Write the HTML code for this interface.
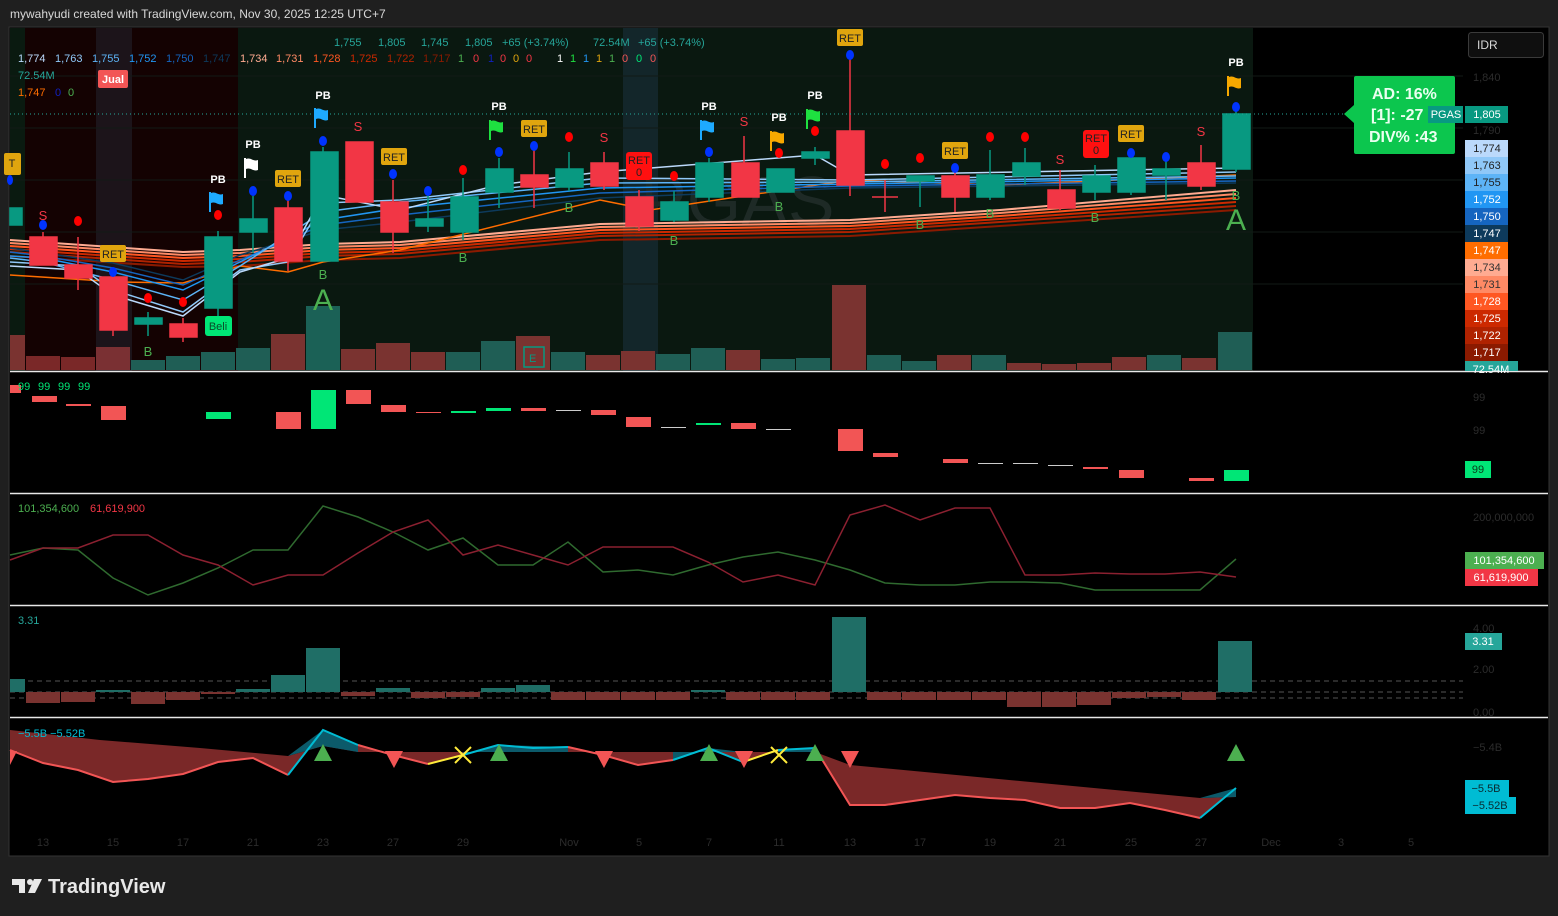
<!DOCTYPE html>
<html><head><meta charset="utf-8">
<style>
html,body{margin:0;padding:0;background:#1f1f1f;width:1558px;height:916px;overflow:hidden}
svg{display:block}
text{font-family:"Liberation Sans",sans-serif}
</style></head>
<body>
<svg width="1558" height="916" viewBox="0 0 1558 916" xmlns="http://www.w3.org/2000/svg">
<rect x="0" y="0" width="1558" height="916" fill="#1f1f1f"/>
<text x="10" y="18" font-size="12" fill="#d8d8d8">mywahyudi created with TradingView.com, Nov 30, 2025 12:25 UTC+7</text>
<!-- chart frame -->
<rect x="9" y="27" width="1540" height="829" fill="#000" stroke="#333" stroke-width="1"/>
<!-- main pane backgrounds -->
<rect x="10" y="28" width="15" height="343" fill="#0a1a10"/>
<rect x="25" y="28" width="213" height="343" fill="#140202"/>
<rect x="96" y="28" width="36" height="343" fill="#1c141a"/>
<rect x="238" y="28" width="1015" height="343" fill="#0a1810"/>
<rect x="623" y="28" width="35" height="343" fill="#13262a"/>
<!-- grid faint -->
<g stroke="#121a16" stroke-width="1">
<line x1="10" y1="76" x2="1463" y2="76"/><line x1="10" y1="128" x2="1463" y2="128"/><line x1="10" y1="180" x2="1463" y2="180"/><line x1="10" y1="232" x2="1463" y2="232"/><line x1="10" y1="284" x2="1463" y2="284"/>
</g>
<text x="640" y="225" font-size="70" fill="#1e2a26">PGAS</text>
<!-- volume -->
<g>
<rect x="10" y="335" width="15" height="35" fill="#7a3330"/>
<rect x="26" y="356" width="34" height="14" fill="#7a2828"/>
<rect x="61" y="357" width="34" height="13" fill="#7a2828"/>
<rect x="96" y="347" width="34" height="23" fill="#7a3033"/>
<rect x="131" y="360" width="34" height="10" fill="#1f5e55"/>
<rect x="166" y="356" width="34" height="14" fill="#1f5e55"/>
<rect x="201" y="352" width="34" height="18" fill="#1f5e55"/>
<rect x="236" y="348" width="34" height="22" fill="#1f5e55"/>
<rect x="271" y="334" width="34" height="36" fill="#7a3330"/>
<rect x="306" y="306" width="34" height="64" fill="#1b6156"/>
<rect x="341" y="349" width="34" height="21" fill="#7a3330"/>
<rect x="376" y="343" width="34" height="27" fill="#7a3330"/>
<rect x="411" y="352" width="34" height="18" fill="#7a3330"/>
<rect x="446" y="352" width="34" height="18" fill="#1f5e55"/>
<rect x="481" y="341" width="34" height="29" fill="#1f5e55"/>
<rect x="516" y="336" width="34" height="34" fill="#7a3330"/>
<rect x="551" y="352" width="34" height="18" fill="#1f5e55"/>
<rect x="586" y="355" width="34" height="15" fill="#7a3330"/>
<rect x="621" y="351" width="34" height="19" fill="#7a3330"/>
<rect x="656" y="354" width="34" height="16" fill="#1f5e55"/>
<rect x="691" y="348" width="34" height="22" fill="#1f5e55"/>
<rect x="726" y="350" width="34" height="20" fill="#7a3330"/>
<rect x="761" y="359" width="34" height="11" fill="#1f5e55"/>
<rect x="796" y="358" width="34" height="12" fill="#1f5e55"/>
<rect x="832" y="285" width="34" height="85" fill="#7a3330"/>
<rect x="867" y="355" width="34" height="15" fill="#1f5e55"/>
<rect x="902" y="361" width="34" height="9" fill="#1f5e55"/>
<rect x="937" y="355" width="34" height="15" fill="#7a3330"/>
<rect x="972" y="355" width="34" height="15" fill="#1f5e55"/>
<rect x="1007" y="363" width="34" height="7" fill="#7a3330"/>
<rect x="1042" y="364" width="34" height="6" fill="#7a3330"/>
<rect x="1077" y="363" width="34" height="7" fill="#7a3330"/>
<rect x="1112" y="357" width="34" height="13" fill="#7a3330"/>
<rect x="1147" y="355" width="34" height="15" fill="#1f5e55"/>
<rect x="1182" y="358" width="34" height="12" fill="#7a3330"/>
<rect x="1218" y="332" width="34" height="38" fill="#1f5e55"/>
</g>
<rect x="524" y="347" width="20" height="20" fill="none" stroke="#089981" stroke-width="1.5" transform="rotate(0)"/>
<text x="529" y="362" font-size="11" fill="#089981">E</text>
<!-- orange/red EMA band -->
<g fill="none" stroke-width="2">
<polyline stroke="#ffab91" points="10,240 183,252 240,250 323,244 400,242 600,224 850,220 1000,210 1236,190"/>
<polyline stroke="#ff8a65" points="10,243 183,255 240,253 323,247 400,245 600,227 850,223 1000,213 1236,194"/>
<polyline stroke="#ff5722" points="10,246 183,258 240,256 323,250 400,248 600,230 850,226 1000,216 1236,198"/>
<polyline stroke="#cc2900" points="10,249 183,261 240,259 323,253 400,251 600,233 850,229 1000,219 1236,202"/>
<polyline stroke="#b02200" points="10,252 183,264 240,262 323,256 400,254 600,236 850,232 1000,222 1236,206"/>
<polyline stroke="#8b1a00" points="10,256 183,267 240,266 323,260 400,258 600,240 850,236 1000,226 1236,210"/>
<polyline stroke="#ff6d00" stroke-width="1.5" points="10,275 120,282 183,283 240,266 288,272 323,262 400,250 600,200 650,210 850,180 1000,185 1236,175"/>
</g>
<g fill="none" stroke-width="1.5">
<polyline stroke="#0d3a5c" points="10,248 43,253 113,263 183,280 240,255 323,230 400,222 600,198 850,188 1236,183"/>
<polyline stroke="#1565c0" points="10,252 43,256 113,268 183,285 240,260 323,225 400,215 600,193 850,186 1236,181"/>
<polyline stroke="#2196f3" points="10,256 43,258 113,272 183,290 240,262 323,220 400,208 600,188 850,184 1236,178"/>
<polyline stroke="#5db4f7" points="10,258 43,262 113,280 183,300 240,266 323,212 400,202 600,183 850,182 1236,176"/>
<polyline stroke="#90c8f8" points="10,262 78,266 113,290 183,312 240,270 288,262 323,203 400,200 600,178 850,180 1236,172"/>
<polyline stroke="#bbd9fb" points="10,266 78,270 113,295 183,316 240,272 288,258 323,195 400,210 498,185 600,172 815,155 850,175 1236,168"/>
</g>
<!-- candles -->
<g stroke-width="1.5">
<g stroke="#089981" fill="#089981"><rect x="10" y="208" width="12" height="17"/></g>
<g stroke="#f23645" fill="#f23645"><line x1="43" y1="232" x2="43" y2="265"/><rect x="30" y="237" width="27" height="28"/></g>
<g stroke="#f23645" fill="#f23645"><line x1="78" y1="237" x2="78" y2="290"/><rect x="65" y="265" width="27" height="13"/></g>
<g stroke="#f23645" fill="#f23645"><line x1="113" y1="270" x2="113" y2="336"/><rect x="100" y="277" width="27" height="53"/></g>
<g stroke="#089981" fill="#089981"><line x1="148" y1="312" x2="148" y2="336"/><rect x="135" y="318" width="27" height="6"/></g>
<g stroke="#f23645" fill="#f23645"><line x1="183" y1="318" x2="183" y2="342"/><rect x="170" y="324" width="27" height="13"/></g>
<g stroke="#089981" fill="#089981"><line x1="218" y1="231" x2="218" y2="316"/><rect x="205" y="237" width="27" height="71"/></g>
<g stroke="#089981" fill="#089981"><line x1="253" y1="196" x2="253" y2="253"/><rect x="240" y="219" width="27" height="13"/></g>
<g stroke="#f23645" fill="#f23645"><line x1="288" y1="198" x2="288" y2="271"/><rect x="275" y="208" width="27" height="53"/></g>
<g stroke="#089981" fill="#089981"><line x1="323" y1="147" x2="323" y2="261"/><rect x="311" y="152" width="27" height="109"/></g>
<g stroke="#f23645" fill="#f23645"><rect x="346" y="142" width="27" height="60"/></g>
<g stroke="#f23645" fill="#f23645"><line x1="393" y1="180" x2="393" y2="253"/><rect x="381" y="202" width="27" height="30"/></g>
<g stroke="#089981" fill="#089981"><line x1="428" y1="192" x2="428" y2="232"/><rect x="416" y="219" width="27" height="7"/></g>
<g stroke="#089981" fill="#089981"><line x1="463" y1="178" x2="463" y2="240"/><rect x="451" y="197" width="27" height="35"/></g>
<g stroke="#089981" fill="#089981"><line x1="499" y1="158" x2="499" y2="208"/><rect x="486" y="169" width="27" height="23"/></g>
<g stroke="#f23645" fill="#f23645"><line x1="534" y1="150" x2="534" y2="208"/><rect x="521" y="175" width="27" height="12"/></g>
<g stroke="#089981" fill="#089981"><line x1="569" y1="152" x2="569" y2="191"/><rect x="556" y="169" width="27" height="18"/></g>
<g stroke="#f23645" fill="#f23645"><line x1="604" y1="152" x2="604" y2="190"/><rect x="591" y="163" width="27" height="23"/></g>
<g stroke="#f23645" fill="#f23645"><line x1="639" y1="190" x2="639" y2="231"/><rect x="626" y="197" width="27" height="29"/></g>
<g stroke="#089981" fill="#089981"><line x1="674" y1="191" x2="674" y2="222"/><rect x="661" y="202" width="27" height="18"/></g>
<g stroke="#089981" fill="#089981"><line x1="709" y1="158" x2="709" y2="202"/><rect x="696" y="163" width="27" height="34"/></g>
<g stroke="#f23645" fill="#f23645"><line x1="744" y1="136" x2="744" y2="197"/><rect x="732" y="163" width="27" height="34"/></g>
<g stroke="#089981" fill="#089981"><rect x="767" y="169" width="27" height="23"/></g>
<g stroke="#089981" fill="#089981"><line x1="815" y1="147" x2="815" y2="165"/><rect x="802" y="152" width="27" height="6"/></g>
<g stroke="#f23645" fill="#f23645"><line x1="850" y1="55" x2="850" y2="196"/><rect x="837" y="131" width="27" height="54"/></g>
<g stroke="#f23645" fill="#f23645"><line x1="885" y1="180" x2="885" y2="212"/><line x1="872" y1="197" x2="898" y2="197"/></g>
<g stroke="#089981" fill="#089981"><line x1="920" y1="181" x2="920" y2="207"/><rect x="907" y="176" width="27" height="5"/></g>
<g stroke="#f23645" fill="#f23645"><line x1="955" y1="170" x2="955" y2="212"/><rect x="942" y="176" width="27" height="21"/></g>
<g stroke="#089981" fill="#089981"><line x1="990" y1="150" x2="990" y2="200"/><rect x="977" y="175" width="27" height="22"/></g>
<g stroke="#089981" fill="#089981"><line x1="1025" y1="148" x2="1025" y2="185"/><rect x="1013" y="163" width="27" height="13"/></g>
<g stroke="#f23645" fill="#f23645"><line x1="1060" y1="170" x2="1060" y2="210"/><rect x="1048" y="190" width="27" height="18"/></g>
<g stroke="#089981" fill="#089981"><line x1="1095" y1="165" x2="1095" y2="200"/><rect x="1083" y="176" width="27" height="16"/></g>
<g stroke="#089981" fill="#089981"><line x1="1131" y1="150" x2="1131" y2="195"/><rect x="1118" y="158" width="27" height="34"/></g>
<g stroke="#089981" fill="#089981"><line x1="1166" y1="160" x2="1166" y2="200"/><rect x="1153" y="169" width="27" height="6"/></g>
<g stroke="#f23645" fill="#f23645"><line x1="1201" y1="145" x2="1201" y2="190"/><rect x="1188" y="163" width="27" height="23"/></g>
<g stroke="#089981" fill="#089981"><line x1="1236" y1="110" x2="1236" y2="172"/><rect x="1223" y="114" width="27" height="55"/></g>
</g>
<!-- price dotted line -->
<line x1="10" y1="114" x2="1463" y2="114" stroke="#26a69a" stroke-width="1" stroke-dasharray="1,3"/>
<!-- dots -->
<g fill="#0033ff">
<ellipse cx="43" cy="225" rx="4" ry="5"/><ellipse cx="113" cy="272" rx="4" ry="5"/><ellipse cx="253" cy="191" rx="4" ry="5"/><ellipse cx="288" cy="196" rx="4" ry="5"/><ellipse cx="323" cy="141" rx="4" ry="5"/><ellipse cx="393" cy="174" rx="4" ry="5"/><ellipse cx="428" cy="191" rx="4" ry="5"/><ellipse cx="499" cy="152" rx="4" ry="5"/><ellipse cx="534" cy="146" rx="4" ry="5"/><ellipse cx="709" cy="152" rx="4" ry="5"/><ellipse cx="850" cy="55" rx="4" ry="5"/><ellipse cx="955" cy="168" rx="4" ry="5"/><ellipse cx="1131" cy="153" rx="4" ry="5"/><ellipse cx="1166" cy="157" rx="4" ry="5"/><ellipse cx="1236" cy="107" rx="4" ry="5"/><ellipse cx="10" cy="180" rx="3" ry="5"/>
</g>
<g fill="#ff0000">
<ellipse cx="78" cy="221" rx="4" ry="5"/><ellipse cx="148" cy="298" rx="4" ry="5"/><ellipse cx="183" cy="302" rx="4" ry="5"/><ellipse cx="218" cy="215" rx="4" ry="5"/><ellipse cx="463" cy="170" rx="4" ry="5"/><ellipse cx="569" cy="137" rx="4" ry="5"/><ellipse cx="674" cy="176" rx="4" ry="5"/><ellipse cx="779" cy="153" rx="4" ry="5"/><ellipse cx="815" cy="131" rx="4" ry="5"/><ellipse cx="885" cy="164" rx="4" ry="5"/><ellipse cx="920" cy="158" rx="4" ry="5"/><ellipse cx="990" cy="137" rx="4" ry="5"/><ellipse cx="1025" cy="137" rx="4" ry="5"/>
</g>
<!-- S labels -->
<g font-size="13" fill="#f23645" text-anchor="middle">
<text x="43" y="220">S</text><text x="358" y="131">S</text><text x="604" y="142">S</text><text x="744" y="126">S</text><text x="1060" y="164">S</text><text x="1201" y="136">S</text>
</g>
<!-- B labels -->
<g font-size="13" fill="#4caf50" text-anchor="middle">
<text x="148" y="356">B</text><text x="323" y="279">B</text><text x="463" y="262">B</text><text x="569" y="212">B</text><text x="674" y="245">B</text><text x="779" y="211">B</text><text x="920" y="229">B</text><text x="990" y="218">B</text><text x="1095" y="222">B</text><text x="1236" y="200">B</text>
<text x="323" y="310" font-size="30">A</text><text x="1236" y="230" font-size="30">A</text>
</g>
<!-- PB labels -->
<g font-size="11" font-weight="bold" fill="#fff" text-anchor="middle">
<text x="218" y="183">PB</text><text x="253" y="148">PB</text><text x="323" y="99">PB</text><text x="499" y="110">PB</text><text x="709" y="110">PB</text><text x="779" y="121">PB</text><text x="815" y="99">PB</text><text x="1236" y="66">PB</text>
</g>
<!-- flags -->
<g>
<path d="M209,192 h2 v20 h-2z M211,193 c5,-2 7,3 12,1 v10 c-5,2 -7,-3 -12,-1z" fill="#1eaaff"/>
<path d="M244,158 h2 v20 h-2z M246,159 c5,-2 7,3 12,1 v10 c-5,2 -7,-3 -12,-1z" fill="#ffffff"/>
<path d="M314,108 h2 v20 h-2z M316,109 c5,-2 7,3 12,1 v10 c-5,2 -7,-3 -12,-1z" fill="#1eaaff"/>
<path d="M489,120 h2 v20 h-2z M491,121 c5,-2 7,3 12,1 v10 c-5,2 -7,-3 -12,-1z" fill="#1ee040"/>
<path d="M700,120 h2 v20 h-2z M702,121 c5,-2 7,3 12,1 v10 c-5,2 -7,-3 -12,-1z" fill="#1eaaff"/>
<path d="M770,131 h2 v20 h-2z M772,132 c5,-2 7,3 12,1 v10 c-5,2 -7,-3 -12,-1z" fill="#f7a800"/>
<path d="M806,109 h2 v20 h-2z M808,110 c5,-2 7,3 12,1 v10 c-5,2 -7,-3 -12,-1z" fill="#1ee040"/>
<path d="M1227,76 h2 v20 h-2z M1229,77 c5,-2 7,3 12,1 v10 c-5,2 -7,-3 -12,-1z" fill="#f7a800"/>
</g>
<!-- RET labels -->
<g font-size="11" text-anchor="middle">
<rect x="100" y="245" width" width="26" height="17" rx="2" fill="#e0a50e"/><text x="113" y="258" fill="#222">RET</text>
<rect x="275" y="170" width="26" height="17" rx="2" fill="#e0a50e"/><text x="288" y="183" fill="#222">RET</text>
<rect x="381" y="148" width="26" height="17" rx="2" fill="#e0a50e"/><text x="394" y="161" fill="#222">RET</text>
<rect x="521" y="120" width="26" height="17" rx="2" fill="#e0a50e"/><text x="534" y="133" fill="#222">RET</text>
<rect x="837" y="29" width="26" height="17" rx="2" fill="#e0a50e"/><text x="850" y="42" fill="#222">RET</text>
<rect x="942" y="142" width="26" height="17" rx="2" fill="#e0a50e"/><text x="955" y="155" fill="#222">RET</text>
<rect x="1118" y="125" width="26" height="17" rx="2" fill="#e0a50e"/><text x="1131" y="138" fill="#222">RET</text>
<rect x="4" y="153" width="17" height="22" rx="2" fill="#e0a50e"/><text x="12" y="167" fill="#222">T</text>
<rect x="626" y="152" width="26" height="28" rx="3" fill="#ff1010"/><text x="639" y="164" fill="#222">RET</text><text x="639" y="176" fill="#222">0</text>
<rect x="1083" y="130" width="26" height="28" rx="3" fill="#ff1010"/><text x="1096" y="142" fill="#222">RET</text><text x="1096" y="154" fill="#222">0</text>
<rect x="98" y="70" width="30" height="18" rx="2" fill="#f25555"/><text x="113" y="83" fill="#fff" font-weight="bold">Jual</text>
<rect x="205" y="316" width="27" height="20" rx="3" fill="#00e676"/><text x="218" y="330" fill="#0a4a2a">Beli</text>
</g>
<!-- legend -->
<g font-size="11">
<text x="334" y="46" fill="#26a69a">1,755</text><text x="378" y="46" fill="#26a69a">1,805</text><text x="421" y="46" fill="#26a69a">1,745</text><text x="465" y="46" fill="#26a69a">1,805</text><text x="502" y="46" fill="#26a69a">+65 (+3.74%)</text><text x="593" y="46" fill="#26a69a">72.54M</text><text x="638" y="46" fill="#26a69a">+65 (+3.74%)</text>
<text x="18" y="62" fill="#bbd9fb">1,774</text><text x="55" y="62" fill="#90c8f8">1,763</text><text x="92" y="62" fill="#5db4f7">1,755</text><text x="129" y="62" fill="#2196f3">1,752</text><text x="166" y="62" fill="#1565c0">1,750</text><text x="203" y="62" fill="#0d3a5c">1,747</text><text x="240" y="62" fill="#ffab91">1,734</text><text x="276" y="62" fill="#ff8a65">1,731</text><text x="313" y="62" fill="#ff5722">1,728</text><text x="350" y="62" fill="#cc2900">1,725</text><text x="387" y="62" fill="#b02200">1,722</text><text x="423" y="62" fill="#8b1a00">1,717</text>
<text x="458" y="62" fill="#4caf50">1</text><text x="473" y="62" fill="#f23645">0</text><text x="488" y="62" fill="#1020c0">1</text><text x="500" y="62" fill="#f23645">0</text><text x="513" y="62" fill="#e0a50e">0</text><text x="526" y="62" fill="#f23645">0</text>
<text x="557" y="62" fill="#fff">1</text><text x="570" y="62" fill="#1ee040">1</text><text x="583" y="62" fill="#2196f3">1</text><text x="596" y="62" fill="#e0a50e">1</text><text x="609" y="62" fill="#4caf50">1</text><text x="622" y="62" fill="#f25555">0</text><text x="636" y="62" fill="#00e676">0</text><text x="650" y="62" fill="#f25555">0</text>
<text x="18" y="79" fill="#26a69a">72.54M</text>
<text x="18" y="96" fill="#ff6d00">1,747</text><text x="55" y="96" fill="#1020c0">0</text><text x="68" y="96" fill="#4caf50">0</text>
</g>
<!-- pane separators -->
<g stroke="#e8e8e8" stroke-width="1.5">
<line x1="10" y1="371.5" x2="1548" y2="371.5"/><line x1="10" y1="493.5" x2="1548" y2="493.5"/><line x1="10" y1="605.5" x2="1548" y2="605.5"/><line x1="10" y1="717.5" x2="1548" y2="717.5"/>
</g>
<!-- pane 2 -->
<g>
<rect x="10" y="385" width="11" height="8" fill="#f25555"/>
<rect x="32" y="396" width="25" height="6" fill="#f25555"/>
<rect x="66" y="404" width="25" height="2" fill="#f25555"/>
<rect x="101" y="406" width="25" height="14" fill="#f25555"/>
<rect x="206" y="412" width="25" height="7" fill="#00e676"/>
<rect x="276" y="412" width="25" height="17" fill="#f25555"/>
<rect x="311" y="390" width="25" height="39" fill="#00e676"/>
<rect x="346" y="390" width="25" height="14" fill="#f25555"/>
<rect x="381" y="405" width="25" height="7" fill="#f25555"/>
<rect x="416" y="412" width="25" height="1" fill="#f25555"/>
<rect x="451" y="411" width="25" height="2" fill="#00e676"/>
<rect x="486" y="408" width="25" height="3" fill="#00e676"/>
<rect x="521" y="408" width="25" height="3" fill="#f25555"/>
<rect x="556" y="410" width="25" height="1" fill="#ccc"/>
<rect x="591" y="410" width="25" height="5" fill="#f25555"/>
<rect x="626" y="417" width="25" height="10" fill="#f25555"/>
<rect x="661" y="427" width="25" height="1" fill="#ccc"/>
<rect x="696" y="423" width="25" height="2" fill="#00e676"/>
<rect x="731" y="423" width="25" height="6" fill="#f25555"/>
<rect x="766" y="429" width="25" height="1" fill="#ccc"/>
<rect x="838" y="429" width="25" height="22" fill="#f25555"/>
<rect x="873" y="453" width="25" height="4" fill="#f25555"/>
<rect x="943" y="459" width="25" height="4" fill="#f25555"/>
<rect x="978" y="463" width="25" height="1" fill="#ccc"/>
<rect x="1013" y="463" width="25" height="1" fill="#ccc"/>
<rect x="1048" y="465" width="25" height="1" fill="#ccc"/>
<rect x="1083" y="467" width="25" height="2" fill="#f25555"/>
<rect x="1119" y="470" width="25" height="8" fill="#f25555"/>
<rect x="1189" y="478" width="25" height="3" fill="#f25555"/>
<rect x="1224" y="470" width="25" height="11" fill="#00e676"/>
</g>
<g font-size="11" fill="#00e676"><text x="18" y="390">99</text><text x="38" y="390">99</text><text x="58" y="390">99</text><text x="78" y="390">99</text></g>
<!-- pane 3 -->
<polyline fill="none" stroke="#2f6a2f" stroke-width="1.5" points="10,555 43,548 78,550 113,578 148,595 183,583 218,568 253,550 288,550 323,506 358,517 393,532 428,550 463,538 498,565 533,565 568,542 603,572 638,570 673,575 708,565 743,557 778,552 815,560 850,570 885,583 920,585 955,585 990,582 1025,582 1060,583 1095,590 1130,590 1165,590 1200,590 1236,559"/>
<polyline fill="none" stroke="#8b2030" stroke-width="1.5" points="10,560 43,548 78,548 113,535 148,535 183,555 218,565 253,585 288,575 323,575 358,553 393,532 428,520 463,555 498,545 533,555 568,565 603,547 638,547 673,547 708,562 743,582 778,575 815,585 850,515 885,505 920,520 955,508 990,508 1025,575 1060,575 1095,573 1130,574 1165,574 1200,572 1236,577"/>
<text x="18" y="512" font-size="11" fill="#4caf50">101,354,600</text><text x="90" y="512" font-size="11" fill="#f23645">61,619,900</text>
<!-- pane 4 -->
<g stroke="#555" stroke-dasharray="5,4" stroke-width="1"><line x1="10" y1="681" x2="1463" y2="681"/><line x1="10" y1="692" x2="1463" y2="692"/><line x1="10" y1="698" x2="1463" y2="698"/></g>
<g fill="#7a3330">
<rect x="26" y="692" width="34" height="11"/><rect x="61" y="692" width="34" height="10"/><rect x="131" y="692" width="34" height="12"/><rect x="166" y="692" width="34" height="8"/><rect x="201" y="692" width="34" height="2"/><rect x="341" y="692" width="34" height="4"/><rect x="411" y="692" width="34" height="6"/><rect x="446" y="692" width="34" height="5"/><rect x="551" y="692" width="34" height="8"/><rect x="586" y="692" width="34" height="8"/><rect x="621" y="692" width="34" height="8"/><rect x="656" y="692" width="34" height="8"/><rect x="726" y="692" width="34" height="8"/><rect x="761" y="692" width="34" height="8"/><rect x="796" y="692" width="34" height="8"/><rect x="867" y="692" width="34" height="8"/><rect x="902" y="692" width="34" height="8"/><rect x="937" y="692" width="34" height="8"/><rect x="972" y="692" width="34" height="8"/><rect x="1007" y="692" width="34" height="15"/><rect x="1042" y="692" width="34" height="15"/><rect x="1077" y="692" width="34" height="13"/><rect x="1112" y="692" width="34" height="6"/><rect x="1147" y="692" width="34" height="5"/><rect x="1182" y="692" width="34" height="8"/>
</g>
<g fill="#1f6e66">
<rect x="10" y="679" width="15" height="13"/><rect x="96" y="690" width="34" height="2"/><rect x="236" y="689" width="34" height="3"/><rect x="271" y="675" width="34" height="17"/><rect x="306" y="648" width="34" height="44"/><rect x="376" y="688" width="34" height="4"/><rect x="481" y="688" width="34" height="4"/><rect x="516" y="685" width="34" height="7"/><rect x="691" y="690" width="34" height="2"/><rect x="832" y="617" width="34" height="75"/><rect x="1218" y="641" width="34" height="51"/>
</g>
<text x="18" y="624" font-size="11" fill="#26a69a">3.31</text>
<!-- pane 5 -->
<path d="M10,730 L100,740 L200,748 L288,756 L323,746 L358,752 L815,752 L850,765 L1200,798 L1236,797 L1236,788 L1200,818 L1165,810 L1130,803 L1095,808 L1060,808 L1025,800 L990,798 L955,795 L920,800 L885,805 L850,805 L815,748 L778,750 L743,762 L708,748 L673,760 L638,765 L603,755 L568,747 L533,748 L498,745 L463,755 L428,764 L393,755 L358,745 L323,730 L288,775 L253,758 L218,762 L183,774 L148,779 L113,782 L78,770 L43,763 L10,750Z" fill="#7a2828"/>
<path d="M288,756 L323,730 L358,745 L358,752 L323,746Z" fill="#0c5a6a"/>
<path d="M463,755 L498,745 L568,747 L568,752 L463,752Z" fill="#0c5a6a"/>
<path d="M673,760 L708,748 L743,752 L673,752Z M778,750 L815,748 L815,752 L778,752Z M1200,798 L1236,788 L1236,797Z" fill="#0c5a6a"/>
<polyline fill="none" stroke="#f25555" stroke-width="2" points="10,750 43,763 78,770 113,782 148,779 183,774 218,762 253,758 288,775"/>
<polyline fill="none" stroke="#00bcd4" stroke-width="2" points="288,775 323,730 358,745"/>
<polyline fill="none" stroke="#f25555" stroke-width="2" points="358,745 393,755 428,764"/>
<polyline fill="none" stroke="#ffeb3b" stroke-width="2" points="428,764 463,755"/>
<polyline fill="none" stroke="#00bcd4" stroke-width="2" points="463,755 498,745 533,748 568,747"/>
<polyline fill="none" stroke="#f25555" stroke-width="2" points="568,747 603,755 638,765 673,760"/>
<polyline fill="none" stroke="#00bcd4" stroke-width="2" points="673,760 708,748 743,762"/>
<polyline fill="none" stroke="#ffeb3b" stroke-width="2" points="743,762 778,750"/>
<polyline fill="none" stroke="#00bcd4" stroke-width="2" points="778,750 815,748"/>
<polyline fill="none" stroke="#f25555" stroke-width="2" points="815,748 850,805 885,805 920,800 955,795 990,798 1025,800 1060,808 1095,808 1130,803 1165,810 1200,818"/>
<polyline fill="none" stroke="#00bcd4" stroke-width="2" points="1200,818 1236,788"/>
<g fill="#4caf50"><path d="M323,744 l-9,17 h18z"/><path d="M499,744 l-9,17 h18z"/><path d="M709,744 l-9,17 h18z"/><path d="M815,744 l-9,17 h18z"/><path d="M1236,744 l-9,17 h18z"/></g>
<g fill="#f25555"><path d="M385,751 h18 l-9,17z"/><path d="M595,751 h18 l-9,17z"/><path d="M735,751 h18 l-9,17z"/><path d="M841,751 h18 l-9,17z"/><path d="M10,751 h7 l-7,14z"/></g>
<g stroke="#ffeb3b" stroke-width="2"><path d="M455,747 l16,16 M471,747 l-16,16"/><path d="M771,747 l16,16 M787,747 l-16,16"/></g>
<text x="18" y="737" font-size="11" fill="#00bcd4">−5.5B  −5.52B</text>
<!-- time axis -->
<g font-size="11" fill="#2c2c2c" text-anchor="middle">
<text x="43" y="846">13</text><text x="113" y="846">15</text><text x="183" y="846">17</text><text x="253" y="846">21</text><text x="323" y="846">23</text><text x="393" y="846">27</text><text x="463" y="846">29</text><text x="569" y="846">Nov</text><text x="639" y="846">5</text><text x="709" y="846">7</text><text x="779" y="846">11</text><text x="850" y="846">13</text><text x="920" y="846">17</text><text x="990" y="846">19</text><text x="1060" y="846">21</text><text x="1131" y="846">25</text><text x="1201" y="846">27</text><text x="1271" y="846">Dec</text><text x="1341" y="846">3</text><text x="1411" y="846">5</text>
</g>
<!-- right axis faint values -->
<g font-size="11" fill="#2c2c2c">
<text x="1473" y="81">1,840</text><text x="1473" y="134">1,790</text><text x="1473" y="401">99</text><text x="1473" y="434">99</text><text x="1473" y="521">200,000,000</text><text x="1473" y="632">4.00</text><text x="1473" y="673">2.00</text><text x="1473" y="716">0.00</text><text x="1473" y="751">−5.4B</text>
</g>
<!-- IDR -->
<rect x="1468.5" y="32.5" width="75" height="25" rx="3" fill="#0f0f0f" stroke="#3a3a3a"/>
<text x="1477" y="49" font-size="12" fill="#d8d8d8">IDR</text>
<!-- AD box -->
<path d="M1356,76 h97 a2,2 0 0 1 2,2 v74 a2,2 0 0 1 -2,2 h-97 a2,2 0 0 1 -2,-2 v-29 l-10,-9 l10,-9 v-27 a2,2 0 0 1 2,-2z" fill="#0cc64e"/>
<g font-size="16" font-weight="bold" fill="#eafff0"><text x="1372" y="99">AD: 16%</text><text x="1371" y="120">[1]: -27</text><text x="1369" y="142">DIV% :43</text></g>
<!-- right price labels -->
<g font-size="11" text-anchor="middle">
<rect x="1428" y="106" width="35" height="17" fill="#089981"/><text x="1446" y="118" fill="#fff">PGAS</text>
<rect x="1465" y="106" width="43" height="17" fill="#089981"/><text x="1487" y="118" fill="#fff">1,805</text>
<rect x="1465" y="140" width="43" height="17" fill="#bbd9fb"/><text x="1487" y="152" fill="#222">1,774</text>
<rect x="1465" y="157" width="43" height="17" fill="#90c8f8"/><text x="1487" y="169" fill="#222">1,763</text>
<rect x="1465" y="174" width="43" height="17" fill="#5db4f7"/><text x="1487" y="186" fill="#222">1,755</text>
<rect x="1465" y="191" width="43" height="17" fill="#2196f3"/><text x="1487" y="203" fill="#fff">1,752</text>
<rect x="1465" y="208" width="43" height="17" fill="#1565c0"/><text x="1487" y="220" fill="#fff">1,750</text>
<rect x="1465" y="225" width="43" height="17" fill="#0d3a5c"/><text x="1487" y="237" fill="#fff">1,747</text>
<rect x="1465" y="242" width="43" height="17" fill="#ff6d00"/><text x="1487" y="254" fill="#fff">1,747</text>
<rect x="1465" y="259" width="43" height="17" fill="#ffab91"/><text x="1487" y="271" fill="#333">1,734</text>
<rect x="1465" y="276" width="43" height="17" fill="#ff8a65"/><text x="1487" y="288" fill="#333">1,731</text>
<rect x="1465" y="293" width="43" height="17" fill="#ff5722"/><text x="1487" y="305" fill="#fff">1,728</text>
<rect x="1465" y="310" width="43" height="17" fill="#cc2900"/><text x="1487" y="322" fill="#fff">1,725</text>
<rect x="1465" y="327" width="43" height="17" fill="#b02200"/><text x="1487" y="339" fill="#fff">1,722</text>
<rect x="1465" y="344" width="43" height="17" fill="#8b1a00"/><text x="1487" y="356" fill="#fff">1,717</text>
<rect x="1465" y="361" width="53" height="10" fill="#26a69a"/><text x="1491" y="373" fill="#fff">72.54M</text>
<rect x="1465" y="461" width="26" height="17" fill="#00e676"/><text x="1478" y="473" fill="#0a3a1a">99</text>
<rect x="1465" y="552" width="79" height="17" fill="#4caf50"/><text x="1504" y="564" fill="#fff">101,354,600</text>
<rect x="1465" y="569" width="73" height="17" fill="#f23645"/><text x="1501" y="581" fill="#fff">61,619,900</text>
<rect x="1465" y="633" width="37" height="17" fill="#26a69a"/><text x="1483" y="645" fill="#fff">3.31</text>
<rect x="1465" y="780" width="44" height="17" fill="#00bcd4"/><text x="1486" y="792" fill="#0a2a30">−5.5B</text>
<rect x="1465" y="797" width="51" height="17" fill="#00bcd4"/><text x="1490" y="809" fill="#0a2a30">−5.52B</text>
</g>
<rect x="1463" y="372" width="86" height="0" fill="#000"/>
<!-- logo -->
<g fill="#e8e8e8">
<path d="M12,879 h13 v14 h-6 v-8 h-7z"/><circle cx="30" cy="882" r="3"/><path d="M34,879 h8 l-7,14 h-7z"/>
</g>
<text x="48" y="893" font-size="20" font-weight="bold" fill="#e8e8e8">TradingView</text>
</svg>
</body></html>
